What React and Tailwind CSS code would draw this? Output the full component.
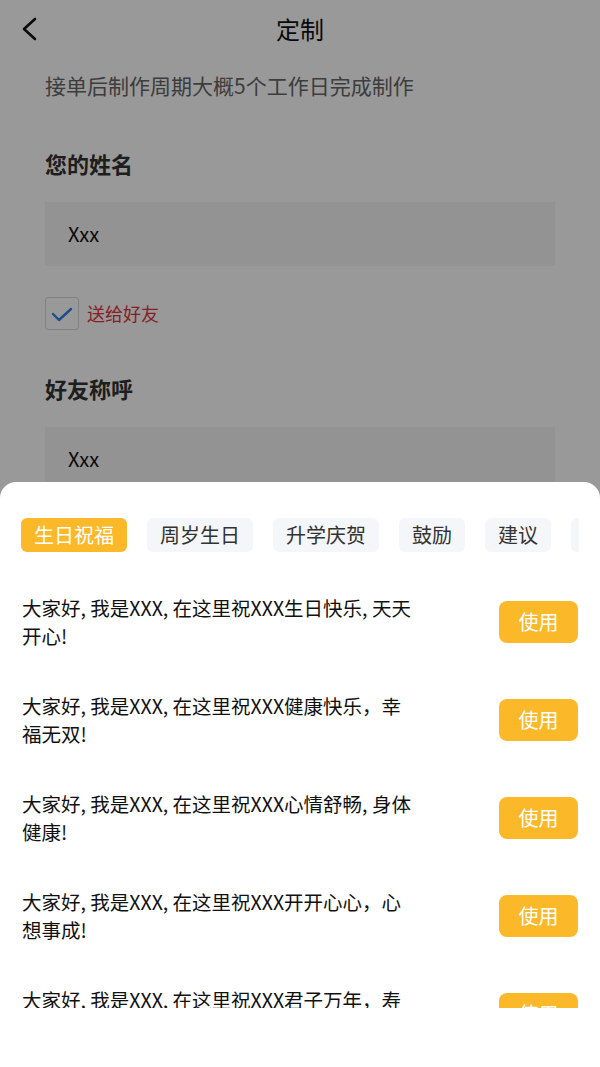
const tabs = ['生日祝福', '周岁生日', '升学庆贺', '鼓励', '建议', '其他']

const blessings = [
  ['大家好, 我是XXX, 在这里祝XXX生日快乐, 天天', '开心!'],
  ['大家好, 我是XXX, 在这里祝XXX健康快乐，幸', '福无双!'],
  ['大家好, 我是XXX, 在这里祝XXX心情舒畅, 身体', '健康!'],
  ['大家好, 我是XXX, 在这里祝XXX开开心心，心', '想事成!'],
  ['大家好, 我是XXX, 在这里祝XXX君子万年，寿', '比南山!'],
]

function BackIcon() {
  return (
    <svg width="18" height="24" viewBox="0 0 18 24" fill="none">
      <path d="M15 2 L4 12 L15 22" stroke="#111" strokeWidth="2.6" strokeLinecap="round" strokeLinejoin="round" />
    </svg>
  )
}

export default function App() {
  return (
    <div className="relative h-[1067px] w-[600px] overflow-hidden bg-white font-['Noto_Sans_CJK_SC',sans-serif]">

      {/* Form page */}
      <div className="flex flex-col">
        <div className="grid h-[58px] grid-cols-[60px_1fr_60px] items-center">
          <div className="flex pl-[20px]">
            <BackIcon />
          </div>
          <h1 className="text-center text-[24px] text-[#111]">定制</h1>
          <div />
        </div>

        <p className="mt-[13px] px-[45px] text-[21px] leading-[28px] text-[#666]">
          接单后制作周期大概5个工作日完成制作
        </p>

        <div className="px-[45px]">
          <h2 className="mt-[49px] text-[22px] font-bold leading-[30px] text-[#333]">您的姓名</h2>
          <div className="mt-[24px] flex h-[64px] items-center bg-[#f5f5f5] pl-[23px] text-[20px] text-[#111]">
            Xxx
          </div>

          <div className="mt-[31px] flex h-[33px] items-center gap-[8px]">
            <div className="flex h-[33px] w-[34px] items-center justify-center rounded-[3px] border border-[#d8d8d8] bg-white">
              <svg width="22" height="16" viewBox="0 0 22 16" fill="none">
                <path d="M2 8 L8 14 L20 3" stroke="#2f7fe6" strokeWidth="2.4" strokeLinecap="round" strokeLinejoin="round" />
              </svg>
            </div>
            <span className="text-[18px] text-[#e2333b]">送给好友</span>
          </div>

          <h2 className="mt-[43px] text-[22px] font-bold leading-[30px] text-[#333]">好友称呼</h2>
          <div className="mt-[24px] flex h-[64px] items-center bg-[#f5f5f5] pl-[23px] text-[20px] text-[#111]">
            Xxx
          </div>
        </div>
      </div>

      {/* Dim overlay */}
      <div className="absolute inset-0 bg-black/40" />

      {/* Bottom sheet */}
      <div className="absolute inset-x-0 bottom-0 flex h-[585px] flex-col rounded-t-[16px] bg-white">
        <div className="mx-[21px] mt-[36px] flex gap-[20px] overflow-hidden">
          {tabs.map((tab, i) => (
            <div
              key={tab}
              className={`flex h-[34px] shrink-0 items-center rounded-[6px] px-[13px] text-[20px] ${
                i === 0 ? 'bg-[#fbb829] text-white' : 'bg-[#f5f6f9] text-[#333]'
              }`}
            >
              {tab}
            </div>
          ))}
        </div>

        <div className="mt-[21px] h-[435px] overflow-hidden px-[22px]">
          {blessings.map((lines, i) => (
            <div key={i} className="flex items-center justify-between py-[21px]">
              <p className="text-[19.5px] leading-[28px] text-[#111]">
                {lines[0]}
                <br />
                {lines[1]}
              </p>
              <button className="flex h-[42px] w-[79px] shrink-0 items-center justify-center rounded-[8px] bg-[#fbb829] text-[20px] text-white">
                使用
              </button>
            </div>
          ))}
        </div>
      </div>
    </div>
  )
}
